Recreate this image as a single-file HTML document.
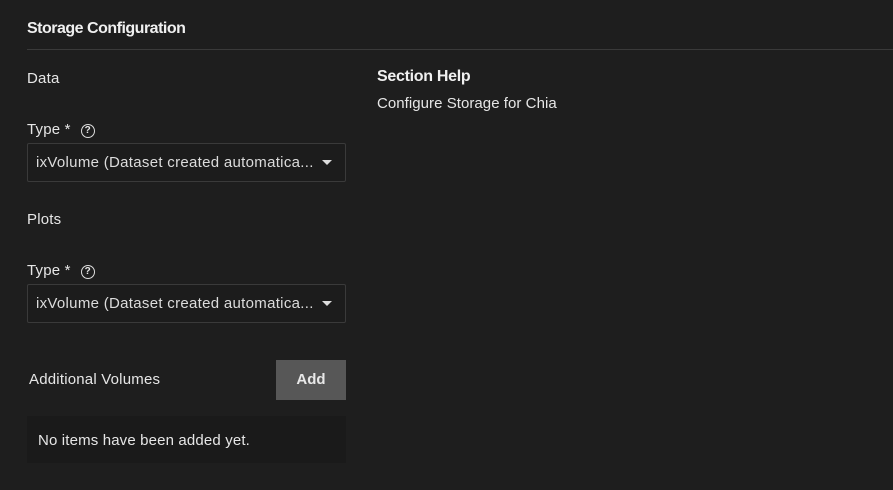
<!DOCTYPE html>
<html><head><style>
body{margin:0;width:893px;height:490px;background:#1e1e1e;font-family:"Liberation Sans",sans-serif;color:#e6e6e6;position:relative;overflow:hidden}
.a{position:absolute;white-space:nowrap}
.t{font-size:15px;letter-spacing:0.2px}
.sel{position:absolute;left:27px;width:317px;height:37px;border:1px solid #3a3a3a;background:#1c1c1c;border-radius:2px}
.sel span{position:absolute;left:8px;top:10px;font-size:15px;letter-spacing:0.3px;color:#dcdcdc}
.sel i{position:absolute;right:13px;top:16px;width:0;height:0;border-left:5px solid transparent;border-right:5px solid transparent;border-top:5px solid #ddd}
.q{display:inline-block;width:12px;height:12px;border:1.6px solid #ddd;border-radius:50%;font-size:10px;font-weight:bold;text-align:center;line-height:12px;margin-left:10px;vertical-align:1px;letter-spacing:0}
</style></head><body>
<div class="a" style="left:27px;top:20px;font-size:16px;font-weight:bold;color:#f0f0f0;letter-spacing:-0.5px">Storage Configuration</div>
<div class="a" style="left:27px;top:49px;width:866px;height:1px;background:#3a3a3a"></div>
<div class="a t" style="left:27px;top:70px">Data</div>
<div class="a t" style="left:27px;top:121px">Type *<span class="q">?</span></div>
<div class="sel" style="top:143px"><span>ixVolume (Dataset created automatica...</span><i></i></div>
<div class="a t" style="left:27px;top:211px">Plots</div>
<div class="a t" style="left:27px;top:262px">Type *<span class="q">?</span></div>
<div class="sel" style="top:284px"><span>ixVolume (Dataset created automatica...</span><i></i></div>
<div class="a t" style="left:29px;top:371px">Additional Volumes</div>
<div class="a" style="left:276px;top:360px;width:70px;height:40px;background:#575757;font-size:15px;font-weight:bold;text-align:center;line-height:40px;color:#e8e8e8">Add</div>
<div class="a" style="left:27px;top:416px;width:319px;height:47px;background:#1a1a1a"></div>
<div class="a t" style="left:38px;top:432px;letter-spacing:0.15px">No items have been added yet.</div>
<div class="a" style="left:377px;top:68px;font-size:16px;font-weight:bold;color:#f0f0f0;letter-spacing:-0.3px">Section Help</div>
<div class="a t" style="left:377px;top:95px;letter-spacing:0.05px">Configure Storage for Chia</div>
</body></html>
